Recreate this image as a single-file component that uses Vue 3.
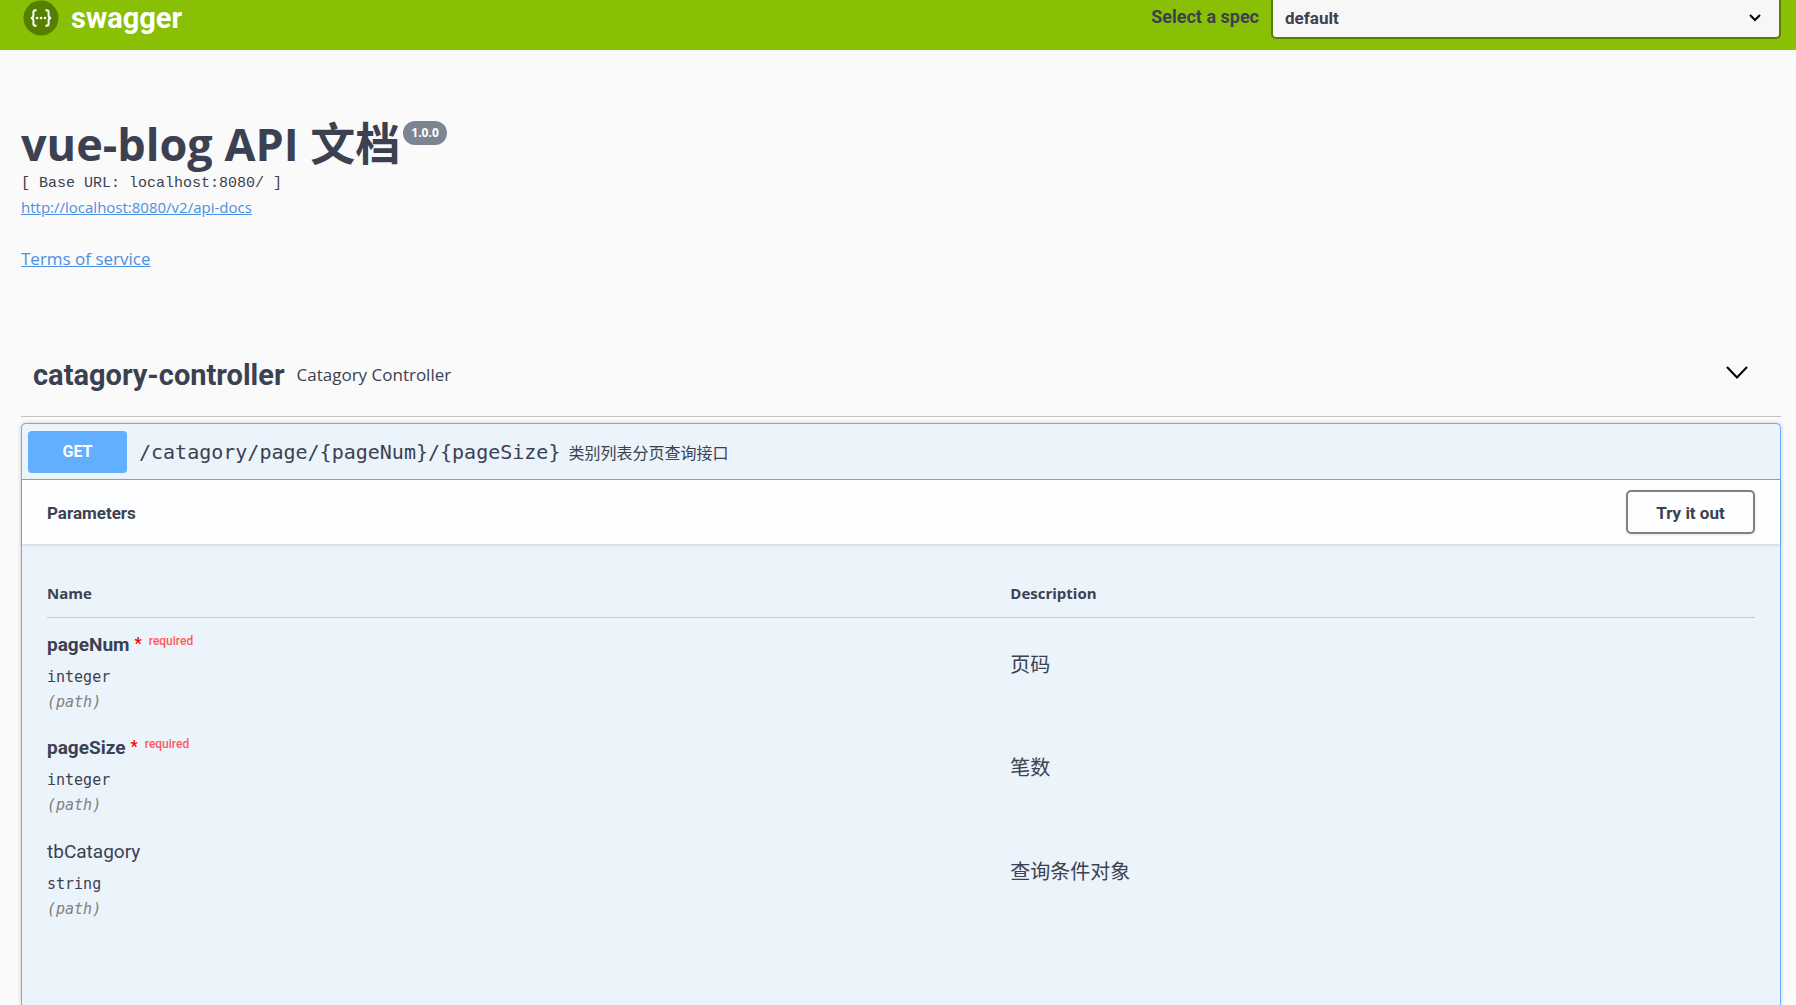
<script setup>
import { ref } from 'vue'

const spec = ref('default')
const parameters = [
  { name: 'pageNum', required: true, type: 'integer', place: '(path)', description: '页码' },
  { name: 'pageSize', required: true, type: 'integer', place: '(path)', description: '笔数' },
  { name: 'tbCatagory', required: false, type: 'string', place: '(path)', description: '查询条件对象' },
]
</script>

<template>
  <div class="page">
    <header class="topbar">
      <a class="brand" href="#">
        <svg class="logo" viewBox="0 0 36 36" aria-hidden="true">
          <circle cx="18" cy="18" r="17.5" fill="#547f00" />
          <g fill="none" stroke="#fff" stroke-width="2">
            <path d="M13.6 10.2h-1.2q-2 0-2 2v3.2q0 2.6-2.6 2.6q2.6 0 2.6 2.6v3.2q0 2 2 2h1.2" />
            <path d="M22.4 10.2h1.2q2 0 2 2v3.2q0 2.6 2.6 2.6q-2.6 0-2.6 2.6v3.2q0 2-2 2h-1.2" />
          </g>
          <g fill="#fff">
            <circle cx="14" cy="18" r="1.3" />
            <circle cx="18" cy="18" r="1.3" />
            <circle cx="22" cy="18" r="1.3" />
          </g>
        </svg>
        <span>swagger</span>
      </a>
      <div class="spec">
        <label for="spec">Select a spec</label>
        <div class="select-box">
          <select id="spec" v-model="spec">
            <option>default</option>
          </select>
          <svg class="caret" viewBox="0 0 12 8" aria-hidden="true">
            <path d="M1 1l5 5l5-5" fill="none" stroke="#000" stroke-width="2" />
          </svg>
        </div>
      </div>
    </header>

    <main class="content">
      <section class="info">
        <h1>vue-blog API 文档<span class="version">1.0.0</span></h1>
        <pre class="base-url">[ Base URL: localhost:8080/ ]</pre>
        <a class="docs" href="#">http://localhost:8080/v2/api-docs</a>
        <a class="terms" href="#">Terms of service</a>
      </section>

      <section class="tag">
        <h2>catagory-controller</h2>
        <p>Catagory Controller</p>
        <button class="toggle" type="button" aria-label="Collapse operations">
          <svg viewBox="0 0 22 13" aria-hidden="true">
            <path d="M1 1l10 10.5l10-10.5" fill="none" stroke="#000" stroke-width="2" />
          </svg>
        </button>
      </section>

      <section class="operation">
        <div class="summary">
          <span class="method">GET</span>
          <span class="path">/catagory/page/{pageNum}/{pageSize}</span>
          <span class="summary-text">类别列表分页查询接口</span>
        </div>
        <div class="section-header">
          <h3>Parameters</h3>
          <button class="try" type="button">Try it out</button>
        </div>
        <div class="table-box">
          <table>
            <thead>
              <tr>
                <th class="name-col">Name</th>
                <th>Description</th>
              </tr>
            </thead>
            <tbody>
              <tr v-for="p in parameters" :key="p.name">
                <td>
                  <div class="param-name" :class="{ required: p.required }">
                    <span>{{ p.name }}</span>
                    <template v-if="p.required">
                      <span class="star">*</span>
                      <span class="required-text">required</span>
                    </template>
                  </div>
                  <div class="param-type">{{ p.type }}</div>
                  <div class="param-in">{{ p.place }}</div>
                </td>
                <td class="description">{{ p.description }}</td>
              </tr>
            </tbody>
          </table>
        </div>
      </section>
    </main>
  </div>
</template>

<style>
body {
  margin: 0;
  background: #fafafa;
}
</style>

<style scoped>
* {
  box-sizing: border-box;
}
.page {
  min-height: 100vh;
  display: flex;
  flex-direction: column;
  overflow: hidden;
  color: #3b4151;
  font-family: "Open Sans", "Noto Sans CJK SC", sans-serif;
}
h1, h2, h3, p, pre {
  margin: 0;
}
button, select {
  font: inherit;
  color: inherit;
}
.topbar {
  flex: none;
  display: flex;
  align-items: center;
  justify-content: space-between;
  height: 67px;
  margin-top: -17px;
  padding: 0 15px 0 23px;
  background: #89bf04;
}
.brand {
  display: flex;
  align-items: center;
  gap: 12px;
  padding-top: 3px;
  color: #fff;
  font-size: 29px;
  font-weight: 700;
  line-height: 36px;
  text-decoration: none;
  font-family: Roboto, sans-serif;
}
.logo {
  width: 36px;
  height: 36px;
}
.spec {
  display: flex;
  align-items: center;
  gap: 12px;
  font-family: Roboto, sans-serif;
  font-weight: 700;
}
.spec label {
  font-size: 18px;
}
.select-box {
  position: relative;
  width: 510px;
}
.select-box select {
  display: block;
  width: 100%;
  height: 45px;
  padding: 2px 12px 0;
  border: 2px solid #547f00;
  border-radius: 5px;
  background: #f7f7f7;
  font-size: 17px;
  appearance: none;
}
.caret {
  position: absolute;
  right: 20px;
  top: 20px;
  width: 12px;
  height: 8px;
  pointer-events: none;
}
.content {
  flex: 1;
  display: flex;
  flex-direction: column;
  padding: 0 15px 0 21px;
}
.info {
  display: flex;
  flex-direction: column;
  align-items: flex-start;
  padding-top: 64px;
}
h1 {
  display: flex;
  align-items: flex-start;
  gap: 3px;
  font-size: 45px;
  line-height: 60px;
}
.version {
  margin-top: 7px;
  padding: 0 8px;
  border-radius: 12px;
  background: #7d8492;
  color: #fff;
  font-size: 12px;
  line-height: 24px;
}
.base-url {
  font-family: "Liberation Mono", monospace;
  font-size: 15px;
  line-height: 20px;
}
.info a {
  color: #4990e2;
}
.docs {
  font-size: 15px;
  line-height: 26px;
}
.terms {
  margin-top: 26px;
  font-size: 17px;
  line-height: 26px;
}
.tag {
  display: flex;
  align-items: center;
  height: 84px;
  margin-top: 61px;
  padding: 0 33px 0 12px;
  border-bottom: 1px solid #c0c2c6;
}
h2 {
  font-family: Roboto, sans-serif;
  font-size: 29px;
  line-height: 36px;
}
.tag p {
  margin-left: 12px;
  font-size: 17px;
}
.toggle {
  margin-left: auto;
  padding: 0 0 4px;
  border: 0;
  background: none;
}
.toggle svg {
  display: block;
  width: 22px;
  height: 13px;
}
.operation {
  flex: 1;
  margin-top: 6px;
  border: 1px solid #61affe;
  border-bottom: 0;
  border-radius: 5px 5px 0 0;
  background: #ebf3fb;
  box-shadow: 0 0 4px rgba(0, 0, 0, 0.19);
}
.summary {
  display: flex;
  align-items: center;
  height: 56px;
  padding: 0 6px;
  border-bottom: 1px solid #61affe;
}
.method {
  width: 99px;
  border-radius: 4px;
  background: #61affe;
  color: #fff;
  font-family: Roboto, sans-serif;
  font-size: 16px;
  font-weight: 700;
  line-height: 42px;
  text-align: center;
}
.path {
  margin-left: 12px;
  font-family: "DejaVu Sans Mono", monospace;
  font-size: 20px;
}
.summary-text {
  margin-left: 8px;
  font-size: 16px;
}
.section-header {
  display: flex;
  align-items: center;
  justify-content: space-between;
  height: 64px;
  padding: 0 25px;
  background: #fdfeff;
  box-shadow: 0 1px 3px rgba(59, 65, 81, 0.2);
}
h3 {
  padding-top: 2px;
  font-family: Roboto, sans-serif;
  font-size: 17px;
}
.try {
  width: 129px;
  height: 44px;
  padding: 2px 0 0;
  border: 2px solid #808080;
  border-radius: 5px;
  background: transparent;
  box-shadow: 0 1px 3px rgba(0, 0, 0, 0.1);
  font-family: Roboto, sans-serif;
  font-size: 17px;
  font-weight: 700;
}
.table-box {
  padding: 25px;
}
table {
  width: 100%;
  border-collapse: collapse;
}
th {
  height: 48px;
  padding: 0;
  border-bottom: 1px solid #c3cad8;
  font-size: 15px;
  text-align: left;
}
.name-col {
  width: 56.4%;
}
td {
  height: 104px;
  padding: 11px 0 0;
  vertical-align: top;
}
.param-name {
  display: flex;
  margin-bottom: 4px;
  font-family: Roboto, sans-serif;
  font-size: 19px;
  line-height: 32px;
}
.required {
  font-weight: 700;
}
.star {
  margin-left: 5px;
  color: #f00;
  font-size: 16px;
  line-height: 30px;
}
.required-text {
  margin-left: 7px;
  color: #ff5a60;
  font-size: 12px;
  font-weight: 500;
  line-height: 24px;
}
.param-type, .param-in {
  font-family: "DejaVu Sans Mono", monospace;
  font-size: 15px;
  line-height: 25px;
}
.param-in {
  color: #808080;
  font-style: italic;
}
td.description {
  padding-top: 32px;
  font-size: 20px;
  line-height: 30px;
}
</style>
